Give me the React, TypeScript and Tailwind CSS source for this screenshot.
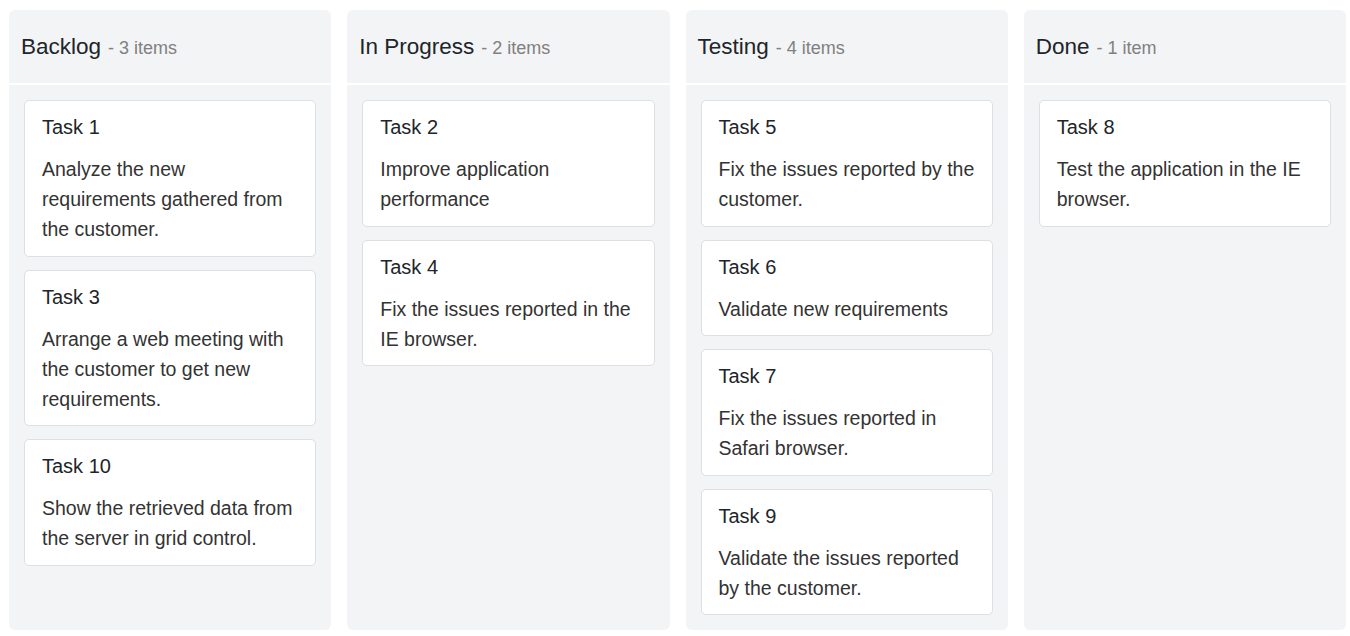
type Task = { id: string; text: string };

type Column = { title: string; tasks: Task[] };

const columns: Column[] = [
  {
    title: "Backlog",
    tasks: [
      { id: "Task 1", text: "Analyze the new requirements gathered from the customer." },
      { id: "Task 3", text: "Arrange a web meeting with the customer to get new requirements." },
      { id: "Task 10", text: "Show the retrieved data from the server in grid control." },
    ],
  },
  {
    title: "In Progress",
    tasks: [
      { id: "Task 2", text: "Improve application performance" },
      { id: "Task 4", text: "Fix the issues reported in the IE browser." },
    ],
  },
  {
    title: "Testing",
    tasks: [
      { id: "Task 5", text: "Fix the issues reported by the customer." },
      { id: "Task 6", text: "Validate new requirements" },
      { id: "Task 7", text: "Fix the issues reported in Safari browser." },
      { id: "Task 9", text: "Validate the issues reported by the customer." },
    ],
  },
  {
    title: "Done",
    tasks: [{ id: "Task 8", text: "Test the application in the IE browser." }],
  },
];

function Card({ task }: { task: Task }) {
  return (
    <div className="shrink-0 rounded-[5px] border border-[#dcdfe3] bg-white px-[17px] pt-[11px] pb-[11.5px]">
      <div className="text-[20px] leading-[30px] text-[#212529]">{task.id}</div>
      <p className="mt-[12px] text-[19.5px] leading-[30px] text-[#333]">{task.text}</p>
    </div>
  );
}

export default function App() {
  return (
    <div
      className="flex h-[636px] gap-4 bg-white pt-[10px] pr-[4px] pb-[6px] pl-[9px]"
      style={{ fontFamily: '"Liberation Sans", Arial, sans-serif' }}
    >
      {columns.map((col) => (
        <div key={col.title} className="flex min-w-0 flex-1 flex-col">
          <div className="flex h-[73px] shrink-0 items-center rounded-t-[6px] bg-[#f3f4f6] px-[12px]">
            <div className="flex items-baseline">
              <span className="text-[22.5px] text-[#212529]">{col.title}</span>
              <span className="ml-[7px] text-[18px] text-[#808080]">
                - {col.tasks.length} {col.tasks.length === 1 ? "item" : "items"}
              </span>
            </div>
          </div>
          <div className="mt-[2px] flex flex-1 flex-col gap-[13px] rounded-b-[6px] bg-[#f3f4f6] p-[15px]">
            {col.tasks.map((t) => (
              <Card key={t.id} task={t} />
            ))}
          </div>
        </div>
      ))}
    </div>
  );
}
